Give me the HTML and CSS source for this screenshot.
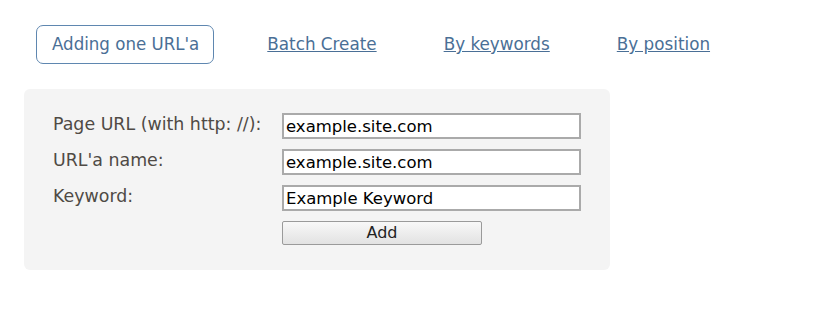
FILE: index.html
```html
<!DOCTYPE html>
<html lang="en">
<head>
    <meta charset="UTF-8">
    <title>Add URL</title>
    <link rel="stylesheet" href="styles.css">
</head>
<body>
    <div class="tabs">
        <span class="tab tab-active">Adding one URL'a</span>
        <a class="tab" href="#">Batch Create</a>
        <a class="tab" href="#">By keywords</a>
        <a class="tab" href="#">By position</a>
    </div>

    <form class="panel">
        <div class="row">
            <label for="url">Page URL (with http: //):</label>
            <input id="url" type="text" value="example.site.com">
        </div>
        <div class="row">
            <label for="name">URL'a name:</label>
            <input id="name" type="text" value="example.site.com">
        </div>
        <div class="row">
            <label for="keyword">Keyword:</label>
            <input id="keyword" type="text" value="Example Keyword">
        </div>
        <div class="row">
            <span></span>
            <button type="button">Add</button>
        </div>
    </form>
</body>
</html>
```

FILE: styles.css
```css
:root {
    --link-color: #4a6f96;
    --tab-border: #5f87b0;
    --label-color: #4f4a45;
    --panel-bg: #f4f4f4;
    --input-border: #aaaaaa;
}

body {
    margin: 0;
    padding: 25px 24px 0;
    font-family: "DejaVu Sans", Verdana, sans-serif;
    font-size: 16.8px;
    background: #ffffff;
}

.tabs {
    display: flex;
    align-items: baseline;
    padding-left: 12px;
    margin-bottom: 25px;
}

.tab {
    color: var(--link-color);
    margin-right: 67px;
}

.tab-active {
    font-family: "DejaVu Sans Condensed", "DejaVu Sans", sans-serif;
    font-size: 18.5px;
    border: 1.5px solid var(--tab-border);
    border-radius: 7px;
    padding: 7px 14px 9px 15px;
    margin-right: 53px;
}

.panel {
    width: 586px;
    box-sizing: border-box;
    background: var(--panel-bg);
    border-radius: 6px;
    padding: 24px 28px 25px 29px;
}

.row {
    display: grid;
    grid-template-columns: 229px 299px;
    align-items: start;
    margin-bottom: 10px;
}

.row:last-child {
    margin-bottom: 0;
}

label {
    color: var(--label-color);
    font-size: 17.4px;
    line-height: 22px;
}

input {
    height: 26px;
    box-sizing: border-box;
    border: 2px solid var(--input-border);
    border-radius: 0;
    padding: 0 2px;
    font-family: inherit;
    font-size: 16.5px;
    color: #000;
    background: #fff;
}

button {
    width: 200px;
    height: 24px;
    border: 1px solid #9a9a9a;
    border-radius: 2px;
    background: linear-gradient(#f8f8f8, #e2e2e2);
    font-family: inherit;
    font-size: 16px;
    line-height: 1;
    color: #222;
}
```
